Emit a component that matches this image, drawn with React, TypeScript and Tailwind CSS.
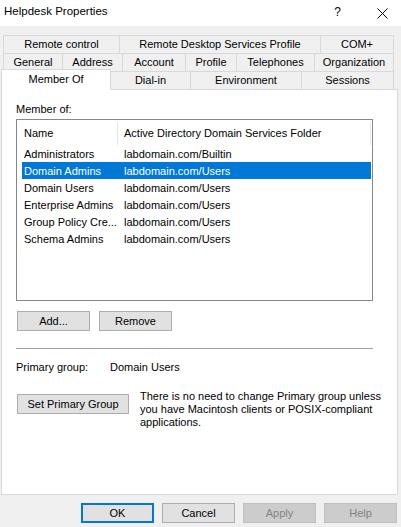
import React from 'react';

type Tab = { label: string; w: string };

const row1: Tab[] = [
  { label: 'Remote control', w: 'w-[117px]' },
  { label: 'Remote Desktop Services Profile', w: 'w-[201px]' },
  { label: 'COM+', w: 'w-[73px]' },
];

const row2: Tab[] = [
  { label: 'General', w: 'w-[60px]' },
  { label: 'Address', w: 'w-[60px]' },
  { label: 'Account', w: 'w-[63px]' },
  { label: 'Profile', w: 'w-[51px]' },
  { label: 'Telephones', w: 'w-[78px]' },
  { label: 'Organization', w: 'w-[79px]' },
];

const row3: Tab[] = [
  { label: 'Dial-in', w: 'w-[80px]' },
  { label: 'Environment', w: 'w-[111px]' },
  { label: 'Sessions', w: 'w-[92px]' },
];

const groups = [
  { name: 'Administrators', folder: 'labdomain.com/Builtin' },
  { name: 'Domain Admins', folder: 'labdomain.com/Users', selected: true },
  { name: 'Domain Users', folder: 'labdomain.com/Users' },
  { name: 'Enterprise Admins', folder: 'labdomain.com/Users' },
  { name: 'Group Policy Cre...', folder: 'labdomain.com/Users' },
  { name: 'Schema Admins', folder: 'labdomain.com/Users' },
];

function TabRow({ tabs }: { tabs: Tab[] }) {
  return (
    <div className="flex h-[18px] ml-[3px]">
      {tabs.map((t, i) => (
        <div
          key={t.label}
          className={`${t.w} h-[18px] flex items-center justify-center border-t border-r border-[#d9d9d9] bg-[#f0f0f0] ${
            i === 0 ? 'border-l' : ''
          }`}
        >
          {t.label}
        </div>
      ))}
    </div>
  );
}

function Button({
  children,
  w = 'w-[73px]',
  variant = 'normal',
}: {
  children: React.ReactNode;
  w?: string;
  variant?: 'normal' | 'default' | 'disabled';
}) {
  const look =
    variant === 'default'
      ? 'border-2 border-[#0078d7] bg-[#e1e1e1] text-black'
      : variant === 'disabled'
      ? 'border border-[#bfbfbf] bg-[#cccccc] text-[#838383]'
      : 'border border-[#adadad] bg-[#e1e1e1] text-black';
  return (
    <div className={`${w} h-[20px] flex items-center justify-center shrink-0 ${look}`}>
      {children}
    </div>
  );
}

export default function App() {
  return (
    <div className="w-[401px] h-[527px] bg-[#f0f0f0] overflow-hidden text-[11px] leading-[13px] text-black font-['Liberation_Sans',Arial,sans-serif]">
      {/* Title bar */}
      <div className="h-[26px] bg-white flex items-start pt-[4px]">
        <span className="pl-[4px] text-[11.5px] leading-[15px]">Helpdesk Properties</span>
        <span className="ml-auto text-[12px] leading-[15px] mt-[1px]">?</span>
        <svg className="ml-[36px] mr-[13px] mt-[4px]" width="11" height="11" viewBox="0 0 11 11">
          <path d="M0.5 0.5 L10.5 10.5 M10.5 0.5 L0.5 10.5" stroke="#000" strokeWidth="1" fill="none" />
        </svg>
      </div>

      {/* Tabs */}
      <div className="pt-[9px]">
        <TabRow tabs={row1} />
        <TabRow tabs={row2} />
        <div className="flex items-end h-[18px] ml-[1px]">
          <div className="w-[110px] h-[21px] -mb-px relative z-10 flex items-center justify-center pb-[2px] bg-white border-t border-l border-r border-[#d9d9d9]">
            Member Of
          </div>
          {row3.map((t) => (
            <div
              key={t.label}
              className={`${t.w} h-[18px] flex items-center justify-center border-t border-r border-[#d9d9d9] bg-[#f0f0f0]`}
            >
              {t.label}
            </div>
          ))}
        </div>
      </div>

      {/* Panel */}
      <div className="ml-[1px] w-[397px] h-[406px] bg-white border border-[#d9d9d9] pl-[14px]">
        <div className="mt-[13px]">Member of:</div>

        <div className="mt-[3px] w-[357px] h-[182px] border border-[#828790] pl-[5px] bg-white">
          <div className="h-[25px] flex items-center pt-[1px]">
            <div className="w-[95px] pl-[2px]">Name</div>
            <div className="w-px h-[23px] bg-[#e5e5e5]" />
            <div className="w-[252px] pl-[6px]">Active Directory Domain Services Folder</div>
            <div className="w-px h-[23px] bg-[#e5e5e5]" />
          </div>
          {groups.map((g) => (
            <div
              key={g.name}
              className={`w-[349px] h-[17px] flex items-center pt-[1px] whitespace-nowrap ${
                g.selected ? 'bg-[#0078d7] text-white' : ''
              }`}
            >
              <div className="w-[96px] pl-[2px] overflow-hidden">{g.name}</div>
              <div className="pl-[6px]">{g.folder}</div>
            </div>
          ))}
        </div>

        <div className="mt-[10px] flex ml-[1px]">
          <Button>Add...</Button>
          <div className="ml-[9px]">
            <Button>Remove</Button>
          </div>
        </div>

        <div className="mt-[17px] w-[357px] h-px bg-[#a0a0a0]" />

        <div className="mt-[12px] flex">
          <div className="w-[94px]">Primary group:</div>
          <div>Domain Users</div>
        </div>

        <div className="mt-[16px] flex items-start ml-[1px]">
          <div className="mt-[4px]">
            <Button w="w-[112px]">Set Primary Group</Button>
          </div>
          <p className="ml-[11px]">
            There is no need to change Primary group unless
            <br />
            you have Macintosh clients or POSIX-compliant
            <br />
            applications.
          </p>
        </div>
      </div>

      {/* Dialog buttons */}
      <div className="mt-[8px] flex justify-end gap-[8px] pr-[4px]">
        <Button variant="default">OK</Button>
        <Button>Cancel</Button>
        <Button variant="disabled">Apply</Button>
        <Button variant="disabled">Help</Button>
      </div>
    </div>
  );
}
